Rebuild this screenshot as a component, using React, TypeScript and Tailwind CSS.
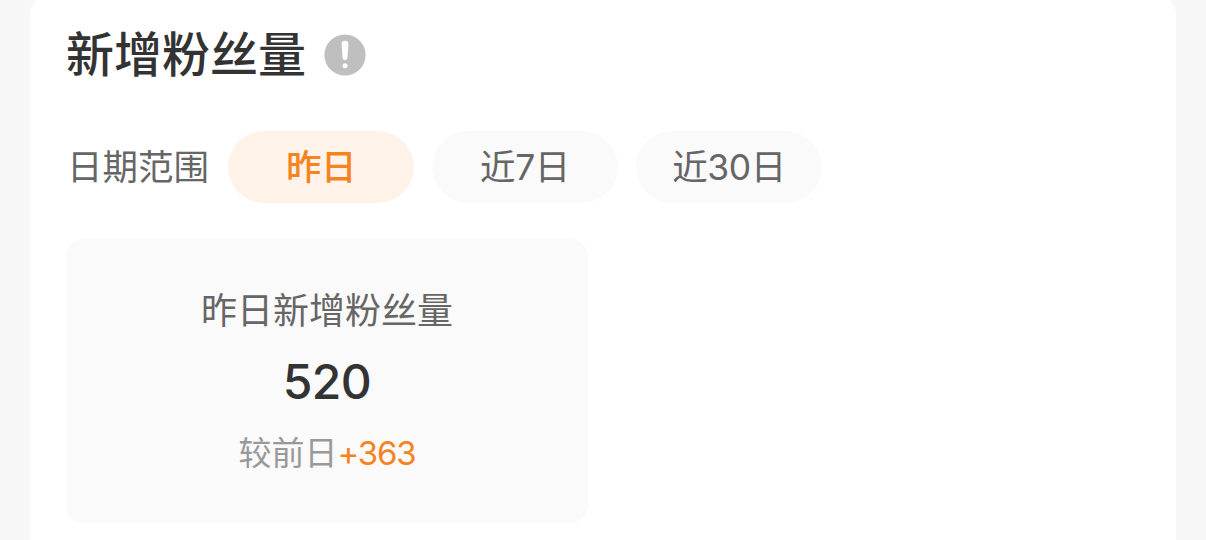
const RANGES = ["昨日", "近7日", "近30日"];

function InfoIcon() {
  return (
    <svg className="size-[42px]" viewBox="0 0 42 42" aria-hidden="true">
      <circle cx="21" cy="21" r="20.6" fill="#bfbfbf" />
      <path d="M17.6 10.2a3.4 3.4 0 0 1 6.8 0l-.9 13.4a2.5 2.5 0 0 1-5 0z" fill="#fff" />
      <circle cx="21" cy="31.7" r="2.5" fill="#fff" />
    </svg>
  );
}

export default function App() {
  const active = "昨日";

  return (
    <div className="h-[540px] overflow-hidden bg-[#f7f7f7] px-[30px] font-[Inter,'Noto_Sans_CJK_SC',sans-serif]">
      <section className="-mt-1 h-[600px] rounded-[18px] bg-white px-9 pt-[29px]">
        <header className="flex h-[60px] items-center gap-[18px]">
          <h1 className="text-[48px] leading-[60px] font-medium text-[#333]">新增粉丝量</h1>
          <InfoIcon />
        </header>

        <div className="mt-[46px] flex h-[72px] items-center gap-[18px]">
          <span className="w-[144px] pt-0.5 pl-px text-[35.5px] leading-[72px] whitespace-nowrap text-[#666]">
            日期范围
          </span>
          {RANGES.map((label) => (
            <button
              key={label}
              className={`h-[72px] w-[186px] rounded-full pt-0.5 text-[35.5px] leading-[70px] tracking-[-0.4px] ${
                label === active ? "bg-[#fff3e9] font-medium text-[#f5841f]" : "bg-[#fafafa] text-[#666]"
              }`}
            >
              {label}
            </button>
          ))}
        </div>

        <div className="mt-9 flex h-[284px] w-[522px] flex-col items-center rounded-[18px] bg-[#fafafa] pt-[45px]">
          <div className="text-[36px] leading-[54px] text-[#666]">昨日新增粉丝量</div>
          <div className="mt-[11px] text-[48px] leading-[66px] font-medium tracking-[-0.6px] text-[#333]">520</div>
          <div className="mt-[13px] text-[33px] leading-[50px] text-[#999]">
            较前日<span className="tracking-[-1.2px] text-[#f5841f]">+363</span>
          </div>
        </div>
      </section>
    </div>
  );
}
